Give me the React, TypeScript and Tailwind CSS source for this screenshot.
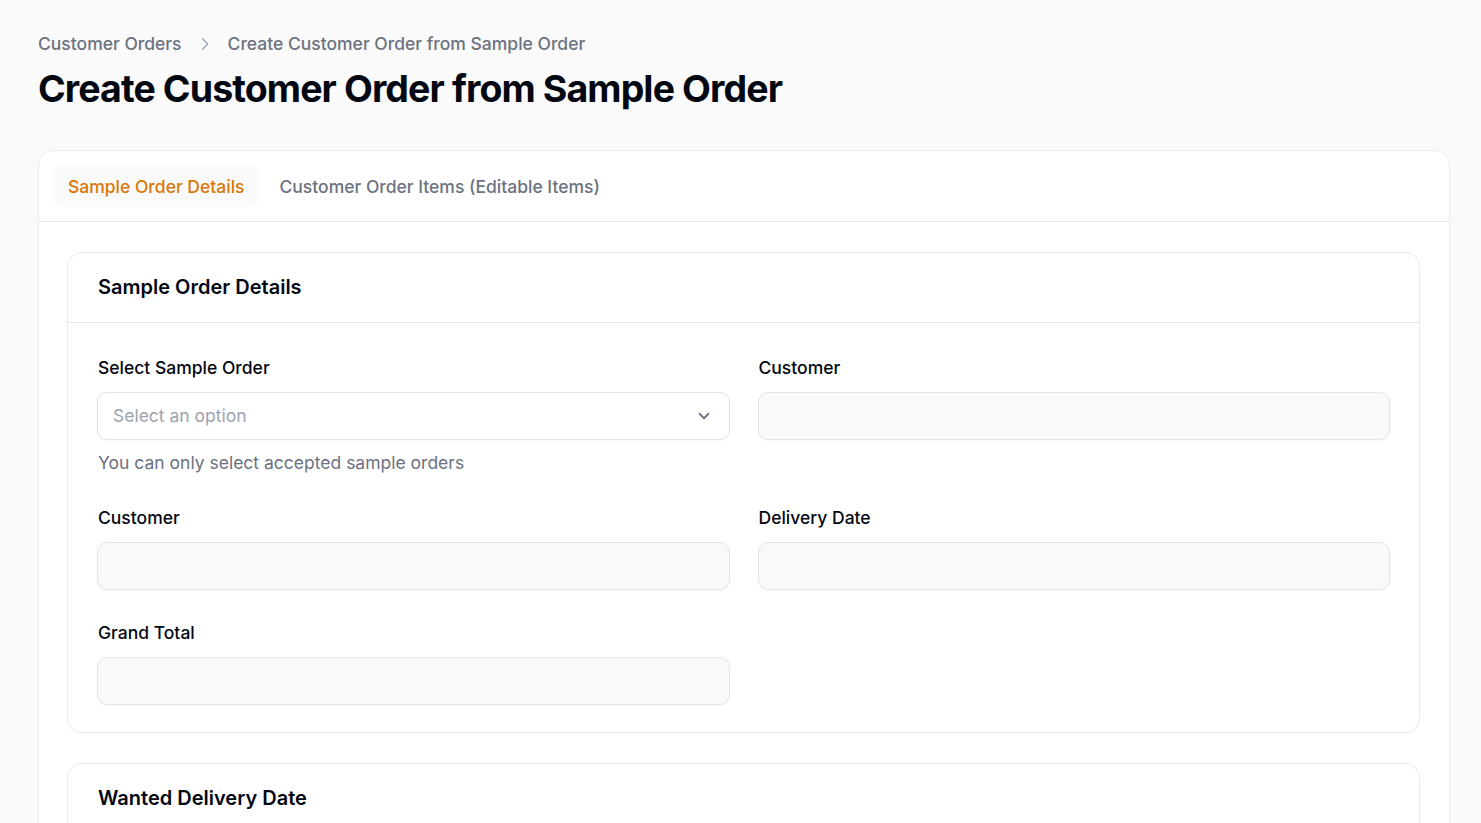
import React from "react";

function Field({ label, children, helper }: { label: string; children: React.ReactNode; helper?: string }) {
  return (
    <div className="flex flex-col">
      <label className="pl-[1px] text-[17.5px] leading-[25px] font-medium text-[#030712]">{label}</label>
      <div className="mt-[12px]">{children}</div>
      {helper && <p className="mt-[10px] pl-[1px] text-[17.5px] leading-[25px] text-[#6b7280]">{helper}</p>}
    </div>
  );
}

function EmptyInput() {
  return <div className="h-[48px] rounded-[10px] border border-[#e4e4e7] bg-[#f9f9f9] shadow-[0_1px_2px_rgba(0,0,0,0.04)]" />;
}

export default function App() {
  return (
    <div className="min-h-screen bg-[#fafafa] pl-[38px] pr-[31px] pt-[31px] pb-10" style={{ fontFamily: "Inter, 'Noto Sans', sans-serif" }}>
      <nav className="flex items-center text-[17.5px] leading-[25px] text-[#6b7280] font-medium">
        <span>Customer Orders</span>
        <svg className="mx-[14px] h-[18px] w-[18px] text-[#9ca3af]" viewBox="0 0 20 20" fill="none" stroke="currentColor" strokeWidth="1.6" strokeLinecap="round" strokeLinejoin="round">
          <path d="M7.5 4.5 13 10l-5.5 5.5" />
        </svg>
        <span>Create Customer Order from Sample Order</span>
      </nav>
      <h1 className="mt-[10px] text-[37.5px] leading-[45px] font-bold tracking-[-0.9px] text-[#030712]">
        Create Customer Order from Sample Order
      </h1>

      <div className="mt-[39px] rounded-[15px] border border-[#ebebeb] bg-white">
        <div className="flex gap-[5px] border-b border-[#e8e8e8] px-[14px] pt-[13px] pb-[14px]">
          <div className="flex h-[43px] items-center rounded-[10px] bg-[#fafafa] px-[15px] pt-[4px] text-[17.5px] font-medium text-[#d97706]">
            Sample Order Details
          </div>
          <div className="flex h-[43px] items-center rounded-[10px] px-[15px] pt-[4px] text-[17.5px] font-medium text-[#6b7280]">
            Customer Order Items (Editable Items)
          </div>
        </div>

        <div className="flex flex-col gap-[30px] pl-[28px] pr-[29px] pt-[30px]">
          <section className="rounded-[15px] border border-[#ebebeb] bg-white shadow-[0_1px_2px_rgba(0,0,0,0.03)]">
            <div className="border-b border-[#e8e8e8] px-[30px] pt-[20px] pb-[21px]">
              <h2 className="text-[20px] leading-[28px] font-semibold text-[#030712]">Sample Order Details</h2>
            </div>
            <div className="grid grid-cols-2 gap-x-[28px] gap-y-[30px] px-[29px] pt-[32px] pb-[27px]">
              <Field label="Select Sample Order" helper="You can only select accepted sample orders">
                <div className="flex h-[48px] items-center justify-between rounded-[10px] border border-[#e4e4e7] bg-white pl-[15px] pr-[15px] shadow-[0_1px_2px_rgba(0,0,0,0.04)]">
                  <span className="text-[17.5px] text-[#9ca3af]">Select an option</span>
                  <svg className="h-[20px] w-[20px] text-[#6b7280]" viewBox="0 0 20 20" fill="none" stroke="currentColor" strokeWidth="1.8" strokeLinecap="round" strokeLinejoin="round">
                    <path d="M5.5 7.75 10 12.25 14.5 7.75" />
                  </svg>
                </div>
              </Field>
              <Field label="Customer">
                <EmptyInput />
              </Field>
              <Field label="Customer">
                <EmptyInput />
              </Field>
              <Field label="Delivery Date">
                <EmptyInput />
              </Field>
              <Field label="Grand Total">
                <EmptyInput />
              </Field>
            </div>
          </section>

          <section className="rounded-[15px] border border-[#ebebeb] bg-white shadow-[0_1px_2px_rgba(0,0,0,0.03)]">
            <div className="border-b border-[#e8e8e8] px-[30px] pt-[20px] pb-[21px]">
              <h2 className="text-[20px] leading-[28px] font-semibold text-[#030712]">Wanted Delivery Date</h2>
            </div>
            <div className="h-[200px]" />
          </section>
        </div>
      </div>
    </div>
  );
}
